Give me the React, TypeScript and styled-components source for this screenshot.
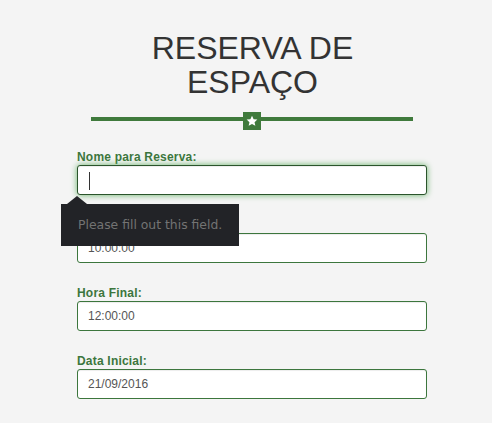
import { FC } from 'react'
import styled, { createGlobalStyle } from 'styled-components'

const GlobalStyle = createGlobalStyle`
  html, body {
    margin: 0;
    background: #f4f4f4;
    font-family: "Liberation Sans", Arial, sans-serif;
    overflow: hidden;
  }
`

const fields = [
  { label: 'Nome para Reserva:', value: '', focused: true },
  { label: 'Hora Inicial:', value: '10:00:00' },
  { label: 'Hora Final:', value: '12:00:00' },
  { label: 'Data Inicial:', value: '21/09/2016' },
]

const StarIcon: FC = () => (
  <svg width="12" height="12" viewBox="0 0 24 24">
    <path
      fill="#fff"
      d="M12 1.5l3.2 6.9 7.5.8-5.6 5.1 1.6 7.4L12 17.9l-6.7 3.8 1.6-7.4-5.6-5.1 7.5-.8z"
    />
  </svg>
)

const App: FC = () => (
  <>
    <GlobalStyle />
    <Page>
      <Title>RESERVA DE<br />ESPAÇO</Title>
      <Divider>
        <Line />
        <StarBox><StarIcon /></StarBox>
        <Line />
      </Divider>
      <Form>
        {fields.map((f) => (
          <Group key={f.label}>
            <Label>{f.label}</Label>
            <Field focused={f.focused}>
              {f.value}
              {f.focused && <Caret />}
            </Field>
            {f.focused && (
              <Tooltip>Please fill out this field.</Tooltip>
            )}
          </Group>
        ))}
      </Form>
    </Page>
  </>
)

export default App

const Page = styled.div`
  padding: 32px 65px 0 77px;
  height: 423px;
  box-sizing: border-box;
`

const Title = styled.h1`
  margin: 0;
  text-align: center;
  font-size: 32px;
  line-height: 33.6px;
  font-weight: normal;
  color: #333;
  padding-left: 1px;
`

const Divider = styled.div`
  display: flex;
  height: 18px;
  margin: 13px 14px 0;
`

const Line = styled.div`
  flex: 1;
  height: 4px;
  margin-top: 5px;
  background: #3f7a3c;
`

const StarBox = styled.div`
  width: 18px;
  height: 18px;
  background: #3f7a3c;
  display: flex;
  align-items: center;
  justify-content: center;
`

const Form = styled.div`
  display: flex;
  flex-direction: column;
  gap: 23px;
  margin-top: 20px;
`

const Group = styled.div`
  position: relative;
  display: flex;
  flex-direction: column;
`

const Label = styled.label`
  font-size: 12px;
  line-height: 14px;
  font-weight: bold;
  color: #3c763d;
  letter-spacing: 0.2px;
  margin-bottom: 1px;
`

const Field = styled.div<{ focused?: boolean }>`
  position: relative;
  height: 30px;
  box-sizing: border-box;
  padding: 0 10px;
  background: #fff;
  border: 1px solid ${({ focused }) => (focused ? '#2b542c' : '#3c763d')};
  border-radius: 3px;
  font-size: 12px;
  line-height: 28px;
  color: #555;
  box-shadow: ${({ focused }) =>
    focused
      ? 'inset 0 1px 1px rgba(0,0,0,.075), 0 0 6px #67b168'
      : 'inset 0 1px 1px rgba(0,0,0,.075)'};
`

const Caret = styled.span`
  position: absolute;
  left: 11px;
  top: 6px;
  width: 1px;
  height: 18px;
  background: #333;
`

const Tooltip = styled.div`
  position: absolute;
  left: -16px;
  top: 54px;
  width: 178px;
  height: 42px;
  box-sizing: border-box;
  padding-left: 17px;
  background: #222327;
  color: #737373;
  font-family: "DejaVu Sans", sans-serif;
  font-size: 12.4px;
  line-height: 42px;
  z-index: 2;

  &::before {
    content: '';
    position: absolute;
    left: 6px;
    top: -8px;
    border-left: 10px solid transparent;
    border-right: 10px solid transparent;
    border-bottom: 8px solid #222327;
  }
`
